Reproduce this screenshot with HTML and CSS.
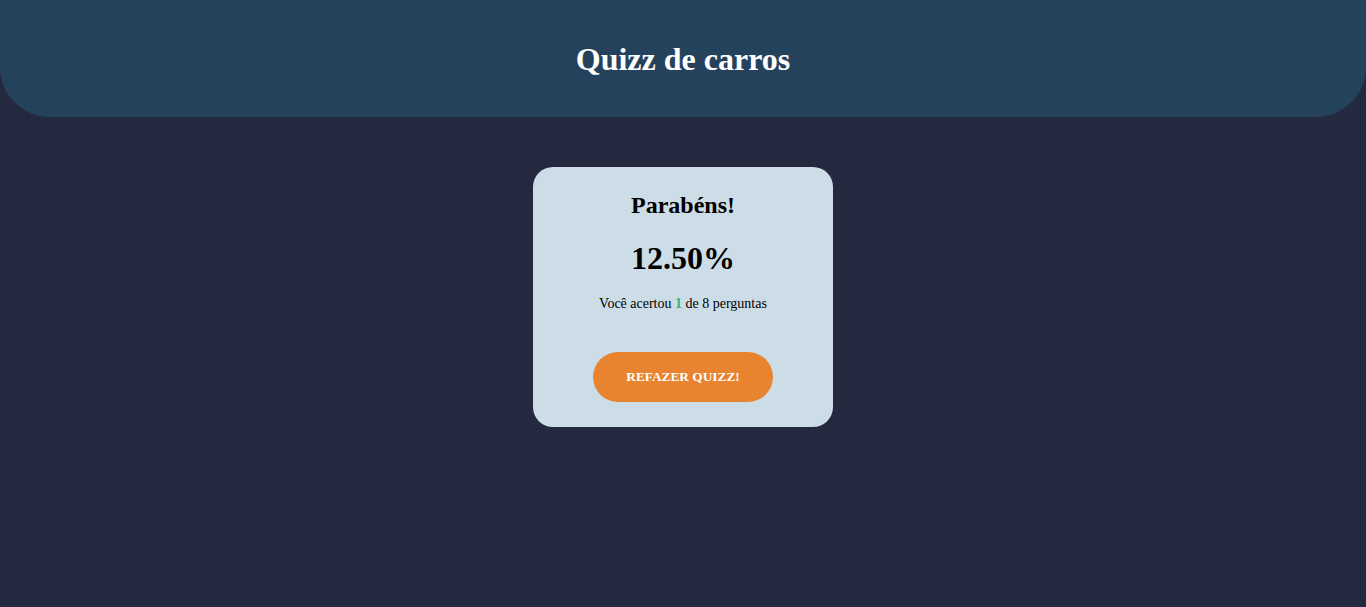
FILE: index.html
```html
<!DOCTYPE html>
<html lang="pt-BR">
<head>
<meta charset="utf-8">
<title>Quizz de carros</title>
<link rel="stylesheet" href="styles.css">
</head>
<body>
<header class="topbar">
  <h1 class="title">Quizz de carros</h1>
</header>
<main class="content">
  <section class="result-card">
    <h2 class="result-heading">Parabéns!</h2>
    <p class="result-score">12.50%</p>
    <p class="result-text">Você acertou <strong class="hits">1</strong> de 8 perguntas</p>
    <button class="retry-btn" type="button">REFAZER QUIZZ!</button>
  </section>
</main>
</body>
</html>
```

FILE: styles.css
```css
html, body {
  margin: 0;
  padding: 0;
}
body {
  background: #242940;
  font-family: "Liberation Serif", "Times New Roman", serif;
  min-height: 100vh;
}
.topbar {
  height: 117px;
  background: #24425b;
  border-radius: 0 0 50px 50px;
  display: flex;
  align-items: center;
  justify-content: center;
}
.title {
  margin: 0;
  color: #ffffff;
  font-size: 32px;
  font-weight: bold;
  padding-top: 2px;
}
.content {
  display: flex;
  justify-content: center;
  padding-top: 50px;
}
.result-card {
  width: 300px;
  box-sizing: border-box;
  background: #cddde7;
  border-radius: 20px;
  padding: 25px 0 25px;
  display: flex;
  flex-direction: column;
  align-items: center;
}
.result-heading {
  margin: 0;
  font-size: 24px;
  font-weight: bold;
  color: #000;
}
.result-score {
  margin: 21px 0 0;
  font-size: 32px;
  font-weight: bold;
  color: #000;
}
.result-text {
  margin: 19px 0 0;
  font-size: 14px;
  color: #000;
}
.hits {
  color: #3cb371;
}
.retry-btn {
  margin-top: 40px;
  width: 180px;
  height: 50px;
  border: none;
  border-radius: 25px;
  background: #e8832f;
  color: #ffffff;
  font-family: "Liberation Serif", "Times New Roman", serif;
  font-weight: bold;
  font-size: 13.333px;
  cursor: pointer;
}
```
